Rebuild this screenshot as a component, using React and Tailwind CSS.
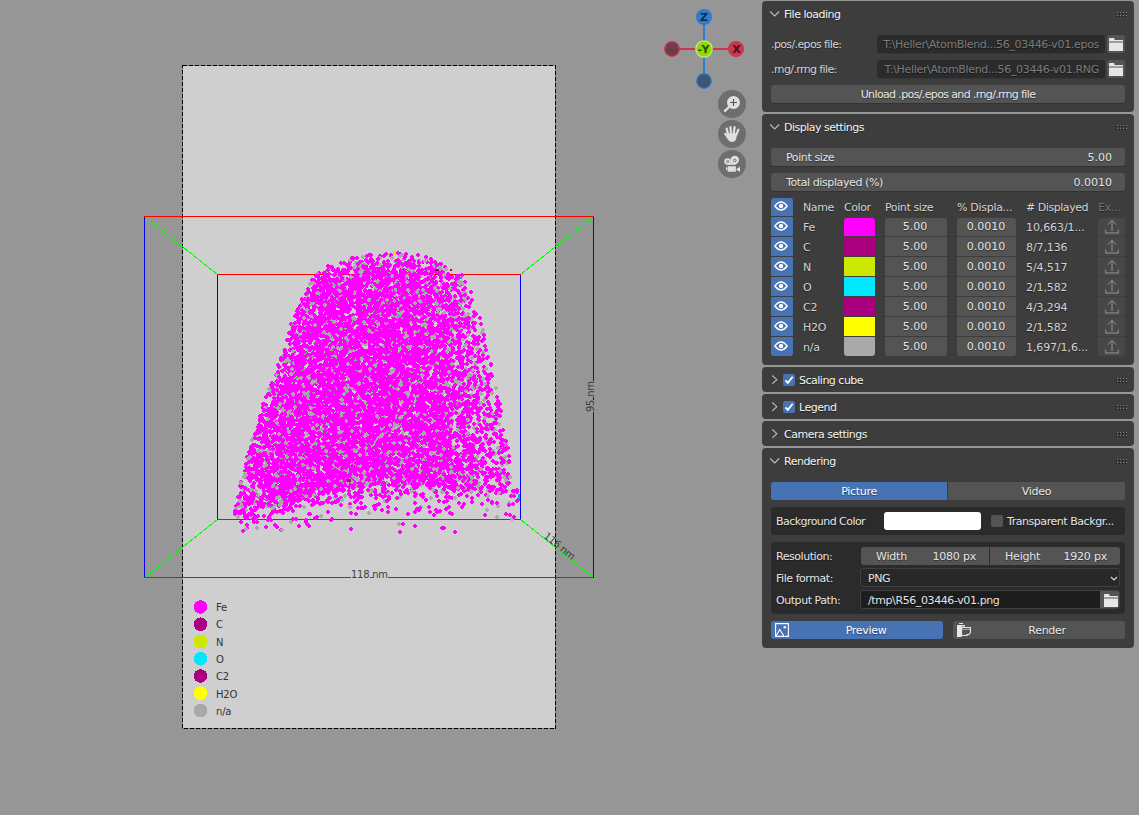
import React from "react";

/* ---------- atom cloud ---------- */

const LEFT_EDGE = [[251, 372], [256, 352], [265, 329], [275, 313], [290, 305], [315, 294], [340, 286], [370, 276], [390, 267], [420, 257], [450, 249], [480, 241], [495, 236], [530, 233]];
const RIGHT_EDGE = [[251, 410], [256, 432], [265, 456], [275, 465], [290, 471], [315, 480], [340, 486], [370, 493], [390, 498], [420, 503], [450, 509], [480, 515], [495, 520], [530, 520]];
const BOTTOM_EDGE = [[230, 516], [245, 511], [260, 508], [285, 502], [310, 495], [330, 492], [360, 486], [400, 484], [440, 485], [470, 490], [500, 494], [525, 500]];

function interp(table, v) {
  for (let i = 1; i < table.length; i++) {
    if (v <= table[i][0]) {
      const [a, b] = table[i - 1];
      const [c, d] = table[i];
      return b + ((v - a) / (c - a)) * (d - b);
    }
  }
  return table[table.length - 1][1];
}

function makeRandom(seed) {
  let s = seed;
  return () => {
    s = (s + 0x6d2b79f5) | 0;
    let t = Math.imul(s ^ (s >>> 15), 1 | s);
    t = (t + Math.imul(t ^ (t >>> 7), 61 | t)) ^ t;
    return ((t ^ (t >>> 14)) >>> 0) / 4294967296;
  };
}

function cloud(seed, count) {
  const rnd = makeRandom(seed);
  let d = "";
  let n = 0;
  while (n < count) {
    const x = 230 + rnd() * 294;
    const y = 251 + rnd() * 280;
    const l = interp(LEFT_EDGE, y);
    const r = interp(RIGHT_EDGE, y);
    if (x < l || x > r) continue;
    const u = (x - l) / (r - l);
    let p = Math.min(1, 0.45 + u * 5, 0.2 + (1 - u) * 2.5);
    p *= Math.min(1, 0.2 + (y - 251) / 45);
    const over = y - interp(BOTTOM_EDGE, x);
    if (over > 0) p *= over < 10 ? 0.3 : over < 28 ? 0.09 : 0.015;
    if (rnd() > p) continue;
    d += `M${Math.round(x) - 1} ${Math.round(y) - 1}h2v1h1v2h-1v1h-2v-1h-1v-2h1z`;
    n++;
  }
  return d;
}

const FE_BACK = cloud(11, 4600);
const NA_MID = cloud(23, 1700);
const FE_FRONT = cloud(37, 4300);
const NA_FRONT = cloud(51, 130);

const ELEMENTS = [
  { name: "Fe", color: "#ff00ff", shown: "10,663/1..." },
  { name: "C", color: "#aa007f", shown: "8/7,136" },
  { name: "N", color: "#cce800", shown: "5/4,517" },
  { name: "O", color: "#00e8ff", shown: "2/1,582" },
  { name: "C2", color: "#aa007f", shown: "4/3,294" },
  { name: "H2O", color: "#ffff00", shown: "2/1,582" },
  { name: "n/a", color: "#a9a9a9", shown: "1,697/1,6..." },
];

function Scene() {
  return (
    <svg width="640" height="815" viewBox="0 0 640 815" className="block shrink-0">
      <rect x="182" y="65" width="374" height="664" fill="#cfcfcf" />
      <g shapeRendering="crispEdges" fill="none" strokeWidth="1">
        <rect x="182.5" y="65.5" width="373" height="663" stroke="#808080" />
        <rect x="182.5" y="65.5" width="373" height="663" stroke="#000" strokeDasharray="4 2" />
        <path d="M144.5 216.5L217.5 274.5M593.5 216.5L520.5 274.5M144.5 577.5L217.5 519.5M593.5 577.5L520.5 519.5" stroke="#00ff00" />
        <path d="M144 216.5H594M217 274.5H521M217 519.5H521M144 577.5H351M370 577.5H373M388 577.5H594" stroke="#ff0000" />
        <path d="M144.5 217V577M593.5 217V381M593.5 397V400M593.5 412V578M217.5 275V519M520.5 275V519" stroke="#0000ff" />
      </g>
      <g shapeRendering="crispEdges">
        <path d={FE_BACK} fill="#ff00ff" />
        <path d={NA_MID} fill="#a9a9a9" />
        <path d={FE_FRONT} fill="#ff00ff" />
        <path d={NA_FRONT} fill="#a9a9a9" />
        <path d="M393 251h3v4h-3z" fill="#cce800" />
        <path d="M347 479h4v3h-4zM435 269h4v2h-4zM450 269h2v2h-2zM298 412h1v2h-1z" fill="#aa007f" />
        <path d="M518 494h2v5h-2zM460 277h2v2h-2z" fill="#00a8ff" />
      </g>
      <g fill="#3c3c3c" fontFamily="DejaVu Sans, sans-serif" fontSize="10">
        <text x="351" y="578" textLength="37">118 nm</text>
        <text transform="translate(594 412) rotate(-90)" textLength="31">95 nm</text>
        <text transform="translate(543 537) rotate(39)" textLength="37">116 nm</text>
        {ELEMENTS.map((e, i) => (
          <text key={e.name} x="216" y={611 + i * 17.3} fontSize="10" letterSpacing="-0.2" fill="#333">{e.name}</text>
        ))}
      </g>
      <g shapeRendering="crispEdges">
        {ELEMENTS.map((e, i) => (
          <circle key={e.name} cx="200.5" cy={607 + i * 17.25} r="6.8" fill={e.color} />
        ))}
      </g>
    </svg>
  );
}

/* ---------- viewport controls ---------- */

function Gizmo() {
  return (
    <svg width="82" height="84" viewBox="663 7 82 84" className="block">
      <path d="M704 24V74" stroke="#2f7bd0" strokeWidth="2" />
      <path d="M679 49H729" stroke="#cc3650" strokeWidth="2" />
      <circle cx="704" cy="17" r="8" fill="#2f7bd0" />
      <circle cx="704" cy="81" r="7.3" fill="#3d5570" stroke="#2f7bd0" strokeWidth="1.3" />
      <circle cx="672" cy="49" r="7.3" fill="#6e3d47" stroke="#cc3650" strokeWidth="1.3" />
      <circle cx="736" cy="49" r="8" fill="#cc3650" />
      <circle cx="704" cy="49" r="8.2" fill="#8adb00" stroke="#c6ec86" strokeWidth="1.2" />
      <g fontFamily="DejaVu Sans, sans-serif" fontSize="11" fontWeight="bold" textAnchor="middle">
        <text x="704" y="21" fill="#12294a">Z</text>
        <text x="736.5" y="53" fill="#45121b">X</text>
        <text x="703.5" y="53" fill="#2f4d08" textLength="12">-Y</text>
      </g>
    </svg>
  );
}

function RoundButton({ children }) {
  return (
    <div className="flex h-7 w-7 items-center justify-center rounded-full bg-[#6e6e6e]">
      <svg width="28" height="28" viewBox="0 0 28 28">{children}</svg>
    </div>
  );
}

function ViewTools() {
  return (
    <div className="flex flex-col gap-0.5">
      <RoundButton>
        <path d="M7 20.800L11 17" stroke="#e0e0e0" strokeWidth="2.400" strokeLinecap="round" />
        <circle cx="15.500" cy="12.500" r="6.500" fill="#e0e0e0" />
        <path d="M15.500 9v7M12 12.500h7" stroke="#555" strokeWidth="1.100" />
      </RoundButton>
      <RoundButton>
        <path d="M10 14L8.600 8.600M12.900 13L12.500 7M15.800 13L16.600 7.200M18.400 14.500L20.400 9.700M10.500 18L7.200 13.800" stroke="#e0e0e0" strokeWidth="2.200" strokeLinecap="round" />
        <path d="M9 13.200h9.700l.7 1.100-1.500 5c-.5 1.700-1.600 2.600-3.600 2.600-2.200 0-3.500-1-4.500-2.700l-2-3.800z" fill="#e0e0e0" />
      </RoundButton>
      <RoundButton>
        <circle cx="9.600" cy="11.500" r="3.300" fill="#e0e0e0" />
        <circle cx="16.800" cy="10" r="4.200" fill="#e0e0e0" />
        <rect x="9.500" y="12.500" width="8" height="2.300" fill="#e0e0e0" />
        <circle cx="9.600" cy="11.500" r="1.100" fill="#e0e0e0" stroke="#666" strokeWidth=".9" />
        <circle cx="16.800" cy="10.500" r="1.300" fill="#e0e0e0" stroke="#666" strokeWidth=".9" />
        <path d="M9.700 16.200h8.200v5.600H9.700zM8 17.300h1.200v2.800H8zM18.500 19l3.500-2.300v5L18.500 20z" fill="#e0e0e0" />
      </RoundButton>
    </div>
  );
}

/* ---------- panel icons ---------- */

function Grip() {
  return (
    <svg width="11" height="5" viewBox="0 0 11 5" shapeRendering="crispEdges">
      {[0, 3, 6, 9].map((x) => (
        <g key={x}>
          <path d={`M${x} 1h1v1h-1zM${x} 4h1v1h-1z`} fill="#161616" />
          <path d={`M${x + 1} 0h1v1h-1zM${x + 1} 3h1v1h-1z`} fill="#808080" />
        </g>
      ))}
    </svg>
  );
}

function Chevron({ open }) {
  return (
    <svg width="12" height="12" viewBox="0 0 12 12" fill="none" stroke="#bdbdbd" strokeWidth="1.1">
      <path d={open ? "M1.200 3.500L5.700 8L10.200 3.500" : "M3.300 1.500L7.800 5.700L3.300 9.900"} />
    </svg>
  );
}

function Folder() {
  return (
    <svg width="14" height="13" viewBox="0 0 14 13">
      <path d="M0 3.200V.8Q0 0 .8 0h3.900q.8 0 .8 .8V2h8.500v1.500H0zM0 4.500h14V13H0z" fill="#e6e6e6" />
    </svg>
  );
}

function Eye() {
  return (
    <svg width="14" height="10" viewBox="0 0 14 10" className="mb-[2px] mr-0.5">
      <path d="M.9 5Q7-3 13.100 5Q7 13 .9 5z" fill="none" stroke="#fff" strokeWidth="1.500" />
      <circle cx="7" cy="5" r="2.200" fill="#fff" />
    </svg>
  );
}

function Export() {
  return (
    <svg width="14" height="15" viewBox="0 0 14 15" fill="none" stroke="#979797" className="mb-px">
      <path d="M7 12V1.500M3 5.500L7 1.300L11 5.500M.7 10.500V14H13.300V10.500" />
    </svg>
  );
}

function Check({ on }) {
  return (
    <div className={on ? "flex h-3 w-3 items-center justify-center rounded-[2px] bg-[#4772b3]" : "h-3 w-3 rounded-[2px] bg-[#545454]"}>
      {on && (
        <svg width="12" height="12" viewBox="0 0 12 12">
          <path d="M2.500 6.300L4.800 8.800L9.700 2.800" fill="none" stroke="#fff" strokeWidth="1.800" />
        </svg>
      )}
    </div>
  );
}

/* ---------- panels ---------- */

function Panel({ title, open, check, className, children }) {
  return (
    <section className={`rounded bg-[#3d3d3d] px-[9px] ${className}`}>
      <header className="flex h-[26px] items-center text-[#f4f4f4]">
        <span className={check ? "-ml-0.5 mr-0.5" : "-ml-0.5 mr-[3px]"}><Chevron open={open} /></span>
        {check && <span className="mr-1"><Check on /></span>}
        <span className="flex-1 pt-0.5 tracking-[-0.5px]">{title}</span>
        <span className="-mr-0.5"><Grip /></span>
      </header>
      {children}
    </section>
  );
}

function FileRow({ label, value }) {
  return (
    <div className="flex h-[18px] items-center">
      <span className="w-[106px] pt-0.5 tracking-[-0.62px]">{label}</span>
      <div className="flex h-[18px] w-[228px] items-center justify-end rounded-[3px] bg-[#2b2b2b] pr-1.5 pt-0.5 tracking-[-0.32px] text-[#7b7b7b] shadow-[0_1px_0_#363636]">
        <span>{value}</span>
      </div>
      <div className="ml-0.5 flex h-[18px] w-[18px] items-center justify-center rounded-[3px] bg-[#545454]"><Folder /></div>
    </div>
  );
}

function Slider({ label, value }) {
  return (
    <div className="flex h-[18px] items-center justify-between rounded-[3px] bg-[#545454] pl-[15px] pr-[13px] pt-0.5 text-[#e5e5e5] shadow-[0_1px_0_#333]">
      <span>{label}</span>
      <span className="tracking-normal">{value}</span>
    </div>
  );
}

function ElementTable() {
  return (
    <div className="mt-[7px] flex flex-col gap-px">
      <div className="flex h-[18px] items-center">
        <div className="flex h-[18px] w-[22px] items-center justify-center rounded-t-[3px] bg-[#4772b3]"><Eye /></div>
        <span className="ml-2.5 w-[41px] pt-0.5">Name</span>
        <span className="w-[41px] pt-0.5">Color</span>
        <span className="w-[72px] pt-0.5">Point size</span>
        <span className="w-[69px] pt-0.5 tracking-[-0.3px]">% Displa...</span>
        <span className="w-[72px] pt-0.5 tracking-[-0.45px]">#&nbsp;Displayed</span>
        <span className="pt-0.5 tracking-[-0.2px] text-[#737373]">Ex...</span>
      </div>
      {ELEMENTS.map((e, i) => {
        const cap = i === 0 ? "rounded-t-[3px] mt-px h-[18px]" : i === 6 ? "rounded-b-[3px] h-[19px]" : "h-[19px]";
        const eyeCap = i === 6 ? "rounded-b-[3px]" : "";
        return (
          <div key={e.name} className="flex h-[19px] items-start">
            <div className={`flex h-[19px] w-[22px] items-center justify-center bg-[#4772b3] ${eyeCap}`}><Eye /></div>
            <span className="ml-2.5 flex h-[21px] w-[41px] items-center tracking-[-0.2px]">{e.name}</span>
            <div className={`w-[31px] ${cap}`} style={{ backgroundColor: e.color }} />
            <div className={`ml-2.5 flex w-[62px] items-center justify-center bg-[#545454] pr-0.5 tracking-normal text-[#e5e5e5] ${cap}`}>5.00</div>
            <div className={`ml-2.5 flex w-[59px] items-center justify-center bg-[#545454] pr-px tracking-normal text-[#e5e5e5] ${cap}`}>0.0010</div>
            <span className="ml-2.5 flex h-[21px] w-[72px] items-center tracking-[-0.1px]">{e.shown}</span>
            <div className={`flex w-[27px] items-center justify-center bg-[#474747] ${cap}`}><Export /></div>
          </div>
        );
      })}
    </div>
  );
}

function RenderingBody() {
  return (
    <>
      <div className="mt-2 flex gap-px text-[#e8e8e8]">
        <div className="flex h-[18px] w-[176px] items-center justify-center rounded-l-[3px] bg-[#4772b3] pt-0.5 tracking-[-0.3px] text-white">Picture</div>
        <div className="flex h-[18px] w-[177px] items-center justify-center rounded-r-[3px] bg-[#545454] pt-0.5 tracking-[-0.3px]">Video</div>
      </div>
      <div className="mt-[7px] flex h-7 items-center rounded-[3px] bg-[#2b2b2b] pl-[5px] text-[#e5e5e5]">
        <span className="w-[108px] pt-0.5 tracking-[-0.55px]">Background Color</span>
        <div className="h-[18px] w-[97px] rounded-[3px] bg-white" />
        <div className="ml-2.5 mr-[4px]"><Check /></div>
        <span className="pt-0.5 tracking-[-0.45px]">Transparent Backgr...</span>
      </div>
      <div className="mt-[7px] flex h-[72px] flex-col gap-[3px] rounded-[3px] bg-[#2b2b2b] py-[5px] pl-[5px] pr-[5px] text-[#e5e5e5]">
        <div className="flex h-[19px] items-center">
          <span className="w-[85px] pt-px tracking-[-0.45px]">Resolution:</span>
          <div className="flex h-[18px] w-[128px] items-center justify-between rounded-l-[3px] bg-[#545454] pl-[15px] pr-[13px] pt-0.5 tracking-[-0.2px]"><span>Width</span><span>1080 px</span></div>
          <div className="ml-px flex h-[18px] w-[130px] items-center justify-between rounded-r-[3px] bg-[#545454] pl-[15px] pr-[13px] pt-0.5 tracking-[-0.2px]"><span>Height</span><span>1920 px</span></div>
        </div>
        <div className="flex h-[19px] items-center">
          <span className="w-[84px] pt-[3px] tracking-[-0.45px]">File format:</span>
          <div className="flex h-[19px] w-[260px] items-center justify-between rounded-[3px] border border-[#404040] bg-[#282828] pl-[7px] pr-px">
            <span className="pt-[3px]">PNG</span>
            <svg width="8" height="6" viewBox="0 0 8 6" className="mt-0.5"><path d="M1 1L4 4L7 1" fill="none" stroke="#d8d8d8" strokeWidth="1.200" /></svg>
          </div>
        </div>
        <div className="flex h-[19px] items-center">
          <span className="w-[84px] pt-[3px] tracking-[-0.45px]">Output Path:</span>
          <div className="flex h-[19px] w-[260px] items-center overflow-hidden rounded-[3px] border border-[#404040] bg-[#1d1d1d] pl-[7px]">
            <span className="flex-1 pt-[3px]">/tmp\R56_03446-v01.png</span>
            <div className="flex h-[18px] w-[19px] items-center justify-center bg-[#545454] pl-0.5 pt-px"><Folder /></div>
          </div>
        </div>
      </div>
      <div className="mt-[7px] flex gap-2.5 tracking-[-0.3px] text-[#e8e8e8]">
        <div className="flex h-[18px] w-[172px] items-center rounded-[3px] bg-[#4772b3] pl-1 text-white">
          <svg width="14" height="14" viewBox="0 0 14 14" fill="none" stroke="#fff" strokeWidth="1.100">
            <path d="M.6 13V.6H13.400V13.400H10M0 13.400H9L4.800 6.500L1 13" />
            <circle cx="9.800" cy="4.200" r="1.300" fill="#fff" stroke="none" />
          </svg>
          <span className="flex-1 pt-0.5 text-center">Preview</span>
        </div>
        <div className="flex h-[18px] w-[172px] items-center rounded-[3px] bg-[#545454] pl-1">
          <svg width="14" height="14" viewBox="0 0 14 14">
            <path d="M2 0h4v1H2zM0 2h8v1.500H4.500V14H0z" fill="#e6e6e6" />
            <path d="M4.500 4.500h9V9.500L12 11.500H10V12.500H4.500z" fill="#545454" stroke="#e6e6e6" strokeWidth="1.200" />
            <path d="M5.500 6.300h7" stroke="#e6e6e6" strokeWidth="1.200" strokeDasharray="1 1" />
          </svg>
          <span className="flex-1 pr-0.5 pt-0.5 text-center">Render</span>
        </div>
      </div>
    </>
  );
}

function Sidebar() {
  return (
    <aside className="flex w-[372px] flex-col gap-0.5 pt-px text-[11px] leading-[14px] tracking-[-0.4px] text-[#d4d4d4] [text-shadow:0_1px_1px_rgba(0,0,0,0.45)]">
      <Panel title="File loading" open className="h-[111px]">
        <div className="mt-2 flex flex-col gap-[7px]">
          <FileRow label=".pos/.epos file:" value={"T:\\Heller\\AtomBlend...56_03446-v01.epos"} />
          <FileRow label=".rng/.rrng file:" value={"T:\\Heller\\AtomBlend...56_03446-v01.RNG"} />
          <div className="flex h-[18px] items-center justify-center rounded-[3px] bg-[#545454] pt-0.5 tracking-[-0.63px] text-[#e8e8e8] shadow-[0_1px_0_#333]">Unload .pos/.epos and .rng/.rrng file</div>
        </div>
      </Panel>
      <Panel title="Display settings" open className="h-[251px]">
        <div className="mt-2 flex flex-col gap-[7px]">
          <Slider label="Point size" value="5.00" />
          <Slider label="Total displayed (%)" value="0.0010" />
        </div>
        <ElementTable />
      </Panel>
      <Panel title="Scaling cube" check className="h-[25px]" />
      <Panel title="Legend" check className="h-[25px]" />
      <Panel title="Camera settings" className="h-[25px]" />
      <Panel title="Rendering" open className="h-[200px]">
        <RenderingBody />
      </Panel>
    </aside>
  );
}

export default function App() {
  return (
    <div className="flex h-[815px] w-[1139px] overflow-hidden bg-[#969696] font-['DejaVu_Sans',sans-serif]">
      <Scene />
      <div className="flex w-[122px] flex-col items-end pr-4 pt-[7px]">
        <div className="pr-px"><Gizmo /></div>
        <div className="-mt-px"><ViewTools /></div>
      </div>
      <Sidebar />
    </div>
  );
}
